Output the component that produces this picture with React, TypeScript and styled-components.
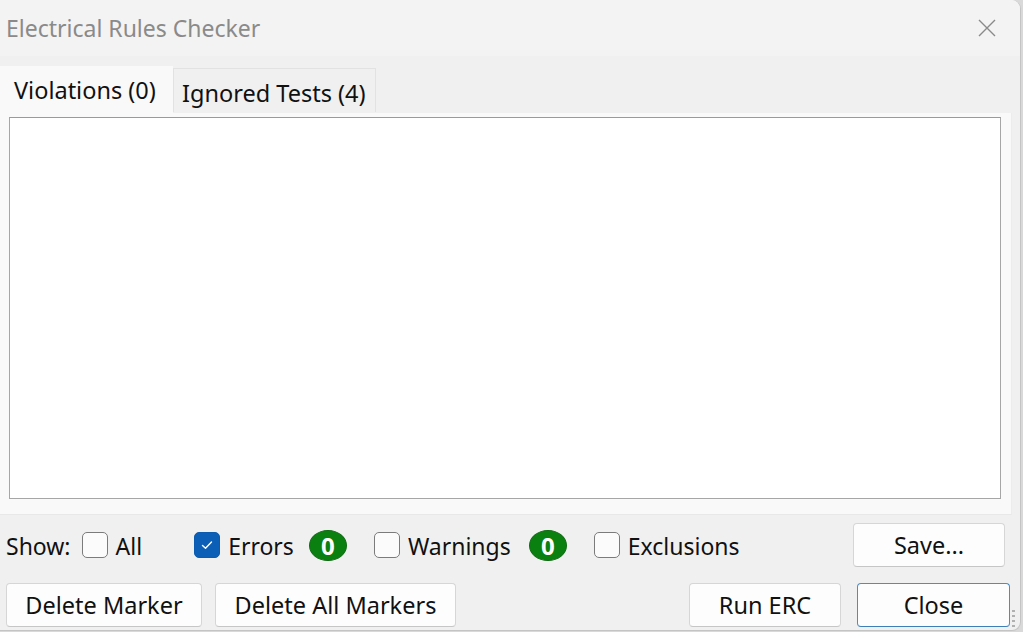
import React from "react";
import styled, { createGlobalStyle } from "styled-components";

const Global = createGlobalStyle`
  html, body { margin: 0; padding: 0; background: #d9d9d9; }
  body { font-family: "Noto Sans", "Open Sans", sans-serif; }
  * { box-sizing: border-box; }
`;

const Window = styled.div`
  width: 1021px;
  height: 631px;
  background: #f0f0f0;
  border-right: 1px solid #c4c4c4;
  border-bottom: 1px solid #c4c4c4;
  border-top-right-radius: 9px;
  border-bottom-right-radius: 9px;
  display: flex;
  flex-direction: column;
  position: relative;
  overflow: hidden;
  color: #1a1a1a;
`;

const TitleBar = styled.div`
  height: 56px;
  background: #f3f3f3;
  display: flex;
  align-items: center;
  justify-content: space-between;
  padding: 0 24px 0 6px;
`;

const Title = styled.div`
  font-size: 23px;
  color: #8a8a8a;
`;

const CloseX = styled.svg`
  width: 18px;
  height: 18px;
`;

const TabRow = styled.div`
  display: flex;
  align-items: flex-end;
  margin-top: 10px;
  height: 47px;
`;

const Tab = styled.div<{ $active?: boolean }>`
  height: ${(p) => (p.$active ? "47px" : "44px")};
  margin-bottom: ${(p) => (p.$active ? "0" : "1px")};
  padding: ${(p) => (p.$active ? "7px 13px 0 13px" : "8px 8px 0 8px")};
  font-size: 23.5px;
  background: ${(p) => (p.$active ? "#f9f9f9" : "#f0f0f0")};
  border: 1px solid ${(p) => (p.$active ? "#f9f9f9" : "#e2e2e2")};
  border-bottom: none;
  color: #111;
  white-space: nowrap;
  ${(p) => (p.$active ? "width: 173px;" : "width: 203px;")}
`;

const Panel = styled.div`
  width: 1012px;
  height: 402px;
  background: #f9f9f9;
  border-right: 1px solid #ececec;
  border-bottom: 1px solid #e8e8e8;
  padding: 4px 10px 15px 9px;
  display: flex;
`;

const ListBox = styled.div`
  flex: 1;
  background: #ffffff;
  border: 1px solid #a6a6a6;
  border-top-color: #9a9a9a;
`;

const ShowRow = styled.div`
  display: flex;
  align-items: center;
  height: 52px;
  margin-top: 4px;
  padding-left: 6px;
  padding-right: 15px;
`;

const Label = styled.span`
  font-size: 23px;
  color: #111;
  white-space: nowrap;
  line-height: 1;
  padding-top: 3px;
`;

const CheckItem = styled.label<{ $gap: number }>`
  display: flex;
  align-items: center;
  gap: 8px;
  margin-left: ${(p) => p.$gap}px;
`;

const Box = styled.span<{ $checked?: boolean }>`
  width: 26px;
  height: 26px;
  border-radius: 5px;
  border: 1px solid ${(p) => (p.$checked ? "#0b5cb0" : "#7b7b7b")};
  background: ${(p) => (p.$checked ? "#0b5fb6" : "#fbfbfb")};
  display: flex;
  align-items: center;
  justify-content: center;
`;

const Badge = styled.span<{ $gap: number }>`
  margin-left: ${(p) => p.$gap}px;
  width: 38px;
  height: 31px;
  border-radius: 50%;
  background: #0a8010;
  border: 1px solid #106b14;
  color: #ffffff;
  font-weight: 700;
  font-size: 24px;
  display: flex;
  align-items: center;
  justify-content: center;
  line-height: 1;
  padding-top: 1px;
`;

const Spacer = styled.div`
  flex: 1;
`;

const Button = styled.button<{ $w: number; $default?: boolean }>`
  width: ${(p) => p.$w}px;
  height: 44px;
  font-family: "Noto Sans", "Open Sans", sans-serif;
  font-size: 23.5px;
  color: #111;
  background: #fdfdfd;
  border: 1px solid ${(p) => (p.$default ? "#4f8cbf" : "#d6d6d6")};
  border-bottom-color: ${(p) => (p.$default ? "#3f7fb6" : "#c6c6c6")};
  border-radius: 4px;
  padding: 0;
  display: flex;
  align-items: center;
  justify-content: center;
`;

const ButtonRow = styled.div`
  display: flex;
  align-items: center;
  margin-top: 12px;
  padding-left: 6px;
  height: 44px;
`;

const Gap = styled.div<{ $w: number }>`
  width: ${(p) => p.$w}px;
  flex: none;
`;

const Grip = styled.svg`
  position: absolute;
  right: 2px;
  bottom: 2px;
  width: 8px;
  height: 20px;
`;

const Check = () => (
  <svg width="14" height="14" viewBox="0 0 14 14">
    <path d="M2.5 7.5 L5.5 10.3 L11.5 4" fill="none" stroke="#fff" strokeWidth="1.4" strokeLinecap="round" strokeLinejoin="round" />
  </svg>
);

export default function App() {
  return (
    <>
      <Global />
      <Window>
        <TitleBar>
          <Title>Electrical Rules Checker</Title>
          <CloseX viewBox="0 0 18 18">
            <path d="M1 1 L17 17 M17 1 L1 17" stroke="#8a8a8a" strokeWidth="1.4" />
          </CloseX>
        </TitleBar>
        <TabRow>
          <Tab $active>Violations (0)</Tab>
          <Tab>Ignored Tests (4)</Tab>
        </TabRow>
        <Panel>
          <ListBox />
        </Panel>
        <ShowRow>
          <Label>Show:</Label>
          <CheckItem $gap={11}>
            <Box />
            <Label>All</Label>
          </CheckItem>
          <CheckItem $gap={52}>
            <Box $checked>
              <Check />
            </Box>
            <Label>Errors</Label>
          </CheckItem>
          <Badge $gap={15}>0</Badge>
          <CheckItem $gap={27}>
            <Box />
            <Label>Warnings</Label>
          </CheckItem>
          <Badge $gap={18}>0</Badge>
          <CheckItem $gap={27}>
            <Box />
            <Label>Exclusions</Label>
          </CheckItem>
          <Spacer />
          <Button $w={152}>Save...</Button>
        </ShowRow>
        <ButtonRow>
          <Button $w={196}>Delete Marker</Button>
          <Gap $w={13} />
          <Button $w={241}>Delete All Markers</Button>
          <Spacer />
          <Button $w={152}>Run ERC</Button>
          <Gap $w={16} />
          <Button $w={153} $default>Close</Button>
          <Gap $w={10} />
        </ButtonRow>
        <Grip viewBox="0 0 8 20">
          {[2, 7, 12, 17].map((y) => (
            <rect key={y} x="2" y={y} width="3" height="2" fill="#b0b0b0" />
          ))}
        </Grip>
      </Window>
    </>
  );
}
